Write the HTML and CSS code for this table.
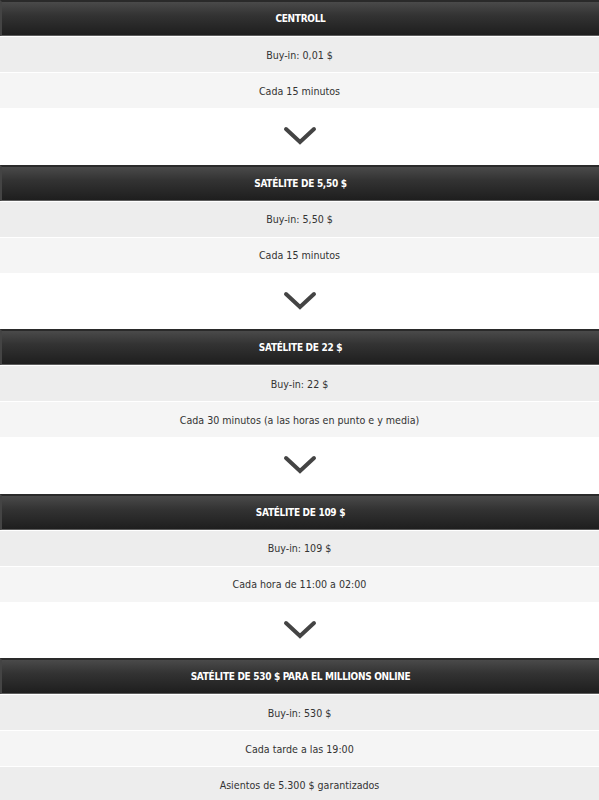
FILE: index.html
```html
<!DOCTYPE html>
<html lang="es">
<head>
<meta charset="utf-8">
<link rel="stylesheet" href="styles.css">
</head>
<body>
<div class="list">
  <section class="block">
    <div class="head">CENTROLL</div>
    <div class="row r1">Buy-in: 0,01 $</div>
    <div class="row r2">Cada 15 minutos</div>
  </section>
  <div class="arrow"><svg width="34" height="20" viewBox="0 0 34 20"><path d="M3 3 L17 16 L31 3" fill="none" stroke="#444" stroke-width="4" stroke-linecap="round" stroke-linejoin="miter"/></svg></div>
  <section class="block">
    <div class="head">SATÉLITE DE 5,50 $</div>
    <div class="row r1">Buy-in: 5,50 $</div>
    <div class="row r2">Cada 15 minutos</div>
  </section>
  <div class="arrow"><svg width="34" height="20" viewBox="0 0 34 20"><path d="M3 3 L17 16 L31 3" fill="none" stroke="#444" stroke-width="4" stroke-linecap="round" stroke-linejoin="miter"/></svg></div>
  <section class="block">
    <div class="head">SATÉLITE DE 22 $</div>
    <div class="row r1">Buy-in: 22 $</div>
    <div class="row r2">Cada 30 minutos (a las horas en punto e y media)</div>
  </section>
  <div class="arrow"><svg width="34" height="20" viewBox="0 0 34 20"><path d="M3 3 L17 16 L31 3" fill="none" stroke="#444" stroke-width="4" stroke-linecap="round" stroke-linejoin="miter"/></svg></div>
  <section class="block">
    <div class="head">SATÉLITE DE 109 $</div>
    <div class="row r1">Buy-in: 109 $</div>
    <div class="row r2">Cada hora de 11:00 a 02:00</div>
  </section>
  <div class="arrow"><svg width="34" height="20" viewBox="0 0 34 20"><path d="M3 3 L17 16 L31 3" fill="none" stroke="#444" stroke-width="4" stroke-linecap="round" stroke-linejoin="miter"/></svg></div>
  <section class="block">
    <div class="head">SATÉLITE DE 530 $ PARA EL MILLIONS ONLINE</div>
    <div class="row r1">Buy-in: 530 $</div>
    <div class="row r2">Cada tarde a las 19:00</div>
    <div class="row r1">Asientos de 5.300 $ garantizados</div>
  </section>
</div>
</body>
</html>
```
FILE: styles.css
```css
* { box-sizing: border-box; }
html, body { margin: 0; padding: 0; background: #fff; }
body {
  font-family: "DejaVu Sans Condensed", "DejaVu Sans", sans-serif;
  font-size: 10.6px;
  color: #333;
}
.list { display: flex; flex-direction: column; }
.block { display: flex; flex-direction: column; gap: 1px; }
.head {
  height: 36px;
  display: flex;
  align-items: center;
  justify-content: center;
  color: #fff;
  font-weight: bold;
  font-size: 10px;
  letter-spacing: -0.3px;
  background: linear-gradient(to bottom, #4a4a4a 0%, #333 40%, #1e1e1e 100%);
  border-top: 2px solid #2a2a2a;
  border-left: 2px solid #444;
  border-bottom: 1px solid #5c5c5c;
}
.row {
  height: 35px;
  display: flex;
  align-items: center;
  justify-content: center;
}
.r1 { background: #ededed; }
.r2 { background: #f5f5f5; }
.arrow {
  height: 56.5px;
  display: flex;
  align-items: center;
  justify-content: center;
}
.arrow svg { display: block; }
```
